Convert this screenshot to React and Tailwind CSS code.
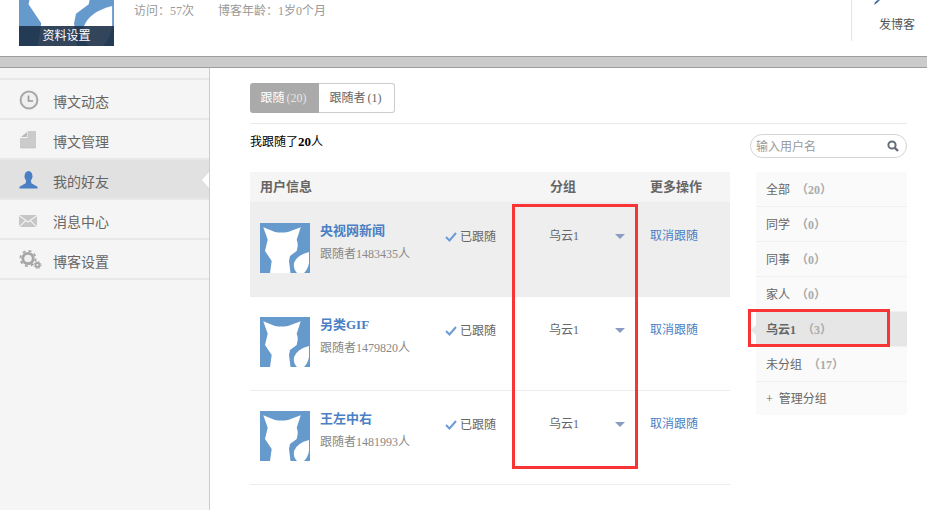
const NAV = [
  { label: "博文动态", icon: "clock" },
  { label: "博文管理", icon: "doc" },
  { label: "我的好友", icon: "user", active: true },
  { label: "消息中心", icon: "mail" },
  { label: "博客设置", icon: "gear" },
];

const FOLLOWS = [
  { name: "央视网新闻", count: "1483435", active: true },
  { name: "另类GIF", count: "1479820" },
  { name: "王左中右", count: "1481993" },
];

const GROUPS = [
  { label: "全部", count: "20" },
  { label: "同学", count: "0" },
  { label: "同事", count: "0" },
  { label: "家人", count: "0" },
  { label: "乌云1", count: "3", active: true },
  { label: "未分组", count: "17" },
];

function Fox({ className }) {
  return (
    <svg viewBox="0 0 50 50" className={className}>
      <rect width="50" height="50" fill="#6699cc" />
      <path
        fill="#fff"
        d="M3.3 4.3 L15 9 Q21 10 28 9 L40.7 4.3 L36.7 16.7 Q38 20 37.7 23 L36.7 28 L30 33 L29 38 L30.5 50 L10 50 L11.7 38 L5 28 L7.7 16.7 Z"
      />
      <path
        fill="#fff"
        d="M49 29 L49 40 Q48 46 44 50 L37 50 Q33 46 34 40 Q37 32 49 29 Z"
      />
    </svg>
  );
}

function NavIcon({ type }) {
  if (type === "clock") {
    return (
      <svg viewBox="0 0 20 20" className="w-[20px] h-[20px]">
        <circle cx="10" cy="10" r="8.4" fill="#f0f0f0" stroke="#a8a8a8" strokeWidth="2" />
        <path d="M9.5 5.5 V11 H14" fill="none" stroke="#999" strokeWidth="1.6" />
      </svg>
    );
  }
  if (type === "doc") {
    return (
      <svg viewBox="0 0 16 18" className="w-[16px] h-[18px] ml-[1px]">
        <path d="M1 6 L7 1 L7 6 Z" fill="#bbb" />
        <path d="M8 0.5 H15.5 V17 H0.5 V7.5 H8 Z" fill="#cbcbcb" stroke="#bdbdbd" strokeWidth="0.6" />
      </svg>
    );
  }
  if (type === "user") {
    return (
      <svg viewBox="0 0 20 20" className="w-[19px] h-[20px]">
        <ellipse cx="10" cy="6" rx="4.2" ry="5.5" fill="#4a7fc4" />
        <path d="M7.5 10.5 H12.5 L13 13.5 L19.5 17 V19 H0.5 V17 L7 13.5 Z" fill="#4a7fc4" />
      </svg>
    );
  }
  if (type === "mail") {
    return (
      <svg viewBox="0 0 18 12" className="w-[18px] h-[12px] mt-[2px]">
        <rect width="18" height="12" fill="#c6c6c6" />
        <path d="M0 0.5 L9 7 L18 0.5 M0 12 L6.8 5.5 M18 12 L11.2 5.5" fill="none" stroke="#f2f2f2" strokeWidth="1.1" />
      </svg>
    );
  }
  return (
    <svg viewBox="0 0 23 20" className="w-[23px] h-[20px]">
      <circle cx="9" cy="8.5" r="5.2" fill="#f0f0f0" stroke="#a6a6a6" strokeWidth="2.8" />
      <circle cx="9" cy="8.5" r="7.6" fill="none" stroke="#a6a6a6" strokeWidth="1.8" strokeDasharray="3 3" />
      <circle cx="18.5" cy="15" r="2" fill="#f0f0f0" stroke="#a6a6a6" strokeWidth="1.8" />
      <circle cx="18.5" cy="15" r="3.5" fill="none" stroke="#a6a6a6" strokeWidth="1" strokeDasharray="1.6 1.2" />
    </svg>
  );
}

function Header() {
  return (
    <header className="h-[56px] bg-white flex overflow-hidden">
      <div className="ml-[19px] w-[95px] h-[46px] overflow-hidden relative flex flex-col justify-end shrink-0">
        <Fox className="w-[95px] h-[95px] shrink-0" />
        <div className="absolute left-0 right-0 bottom-0 h-[20px] bg-[#1d3149]/90 text-white text-xs leading-[20px] text-center">
          资料设置
        </div>
      </div>
      <div className="ml-[20px] pt-[3px] flex gap-6 text-xs leading-[16px] text-[#999] h-fit">
        <span>访问：57次</span>
        <span>博客年龄：1岁0个月</span>
      </div>
      <div className="ml-auto mr-[12px] w-[64px] h-[41px] border-l border-[#e5e5e5] flex flex-col items-end">
        <svg viewBox="0 0 12 6" className="w-[12px] h-[6px] mr-[30px] -mt-[1px]">
          <path d="M1 6 L2 3 L6 0 L8 0 L4 4 Z" fill="#4a6fa5" />
        </svg>
        <span className="mt-[12px] text-xs leading-[16px] text-[#555]">发博客</span>
      </div>
    </header>
  );
}

function Sidebar() {
  return (
    <aside className="w-[210px] shrink-0 bg-[#f5f5f5] border-r border-[#ccc]">
      <div className="h-[12px] border-b-2 border-[#e8e8e8]" />
      {NAV.map((item) => (
        <div
          key={item.label}
          className={`relative h-[40px] pt-[2px] flex items-center border-b-2 border-[#e8e8e8] ${item.active ? "bg-[#e1e1e1]" : ""}`}
        >
          <span className="w-[53px] pl-[19px] flex items-center shrink-0">
            <NavIcon type={item.icon} />
          </span>
          <span className="pt-[6px] text-sm text-[#666]">{item.label}</span>
          {item.active && (
            <span className="absolute right-0 top-[12px] border-y-[8px] border-r-[7px] border-y-transparent border-r-white" />
          )}
        </div>
      ))}
    </aside>
  );
}

function FollowRow({ item }) {
  return (
    <div className={`h-[94px] flex border-b border-[#ececec] pl-[10px] pt-[20px] ${item.active ? "bg-[#eeeeee]" : ""}`}>
      <Fox className="w-[50px] h-[50px] shrink-0" />
      <div className="ml-[10px] w-[125px] shrink-0">
        <div className="text-[13px] font-bold leading-[16px] text-[#4a7fc4]">{item.name}</div>
        <div className="mt-[7px] text-xs leading-[16px] text-[#888]">跟随者{item.count}人</div>
      </div>
      <div className="w-[104px] shrink-0 flex items-center h-[28px]">
        <svg viewBox="0 0 12 10" className="w-[12px] h-[10px] mr-[3px]">
          <path d="M1 5 L4.5 8.5 L11 1" fill="none" stroke="#6b9bd8" strokeWidth="2" />
        </svg>
        <span className="text-xs text-[#666]">已跟随</span>
      </div>
      <div className="w-[101px] shrink-0 h-[26px] flex items-center text-xs text-[#666]">
        <span className="w-[66px]">乌云1</span>
        <span className="border-x-[5px] border-t-[5px] border-x-transparent border-t-[#8a9cc4]" />
      </div>
      <div className="h-[26px] flex items-center text-xs text-[#4a7fc4]">取消跟随</div>
    </div>
  );
}

function GroupList() {
  return (
    <div className="w-[151px] -ml-[1px]">
      {GROUPS.map((g) => (
        <div
          key={g.label}
          className={`relative h-[35px] pt-[2px] flex items-center pl-[10px] border-b border-[#f0f0f0] text-xs ${g.active ? "bg-[#e6e6e6] font-bold" : "bg-[#fafafa]"}`}
        >
          <span className="text-[#666]">{g.label}</span>
          <span className="ml-[6px] text-[#aaa] font-bold">（{g.count}）</span>
          {g.active && (
            <span className="absolute -left-[5px] top-[13px] border-y-[5px] border-r-[5px] border-y-transparent border-r-[#e6e6e6]" />
          )}
        </div>
      ))}
      <div className="h-[33px] flex items-center pl-[10px] bg-[#fafafa] text-xs text-[#666]">
        <span className="mr-[6px]">+</span>管理分组
      </div>
    </div>
  );
}

export default function App() {
  return (
    <div
      className="relative w-[927px] h-[510px] overflow-hidden bg-white"
      style={{ fontFamily: '"Liberation Serif","Noto Sans CJK SC",sans-serif' }}
    >
      <Header />
      <div className="h-[12px] bg-[#cbcbcb] border-y border-[#9e9e9e]" />
      <div className="flex h-[442px]">
        <Sidebar />
        <main className="ml-[40px] w-[657px] pt-[15px]">
          <div className="flex w-fit h-[30px] text-xs">
            <div className="w-[69px] pr-[2px] bg-[#aaaaaa] rounded-l-[3px] text-white flex items-center justify-center">
              跟随<span className="ml-[2px] text-[#e5e5e5]">(20)</span>
            </div>
            <div className="w-[76px] pr-[2px] border border-l-0 border-[#ccc] rounded-r-[3px] text-[#666] flex items-center justify-center">
              跟随者<span className="ml-[2px]">(1)</span>
            </div>
          </div>
          <div className="mt-[10px] border-t border-[#eaeaea] flex">
            <div className="w-[480px] shrink-0">
              <div className="h-[48px] pt-[10px] text-xs leading-[16px] text-black">
                我跟随了<b className="text-[13px]">20</b>人
              </div>
              <div className="h-[31px] bg-[#f5f5f5] border-b border-[#ececec] flex items-center pl-[10px] text-[13px] font-bold text-[#666]">
                <span className="w-[290px]">用户信息</span>
                <span className="w-[100px]">分组</span>
                <span>更多操作</span>
              </div>
              {FOLLOWS.map((f) => (
                <FollowRow key={f.name} item={f} />
              ))}
            </div>
            <div className="ml-[20px] flex-1 pt-[10px]">
              <div className="h-[24px] border border-[#d5d5d5] rounded-full flex items-center pl-[5px] pr-[7px] text-xs text-[#999]">
                <span className="pt-[2px]">输入用户名</span>
                <svg viewBox="0 0 12 12" className="ml-auto w-[12px] h-[12px]">
                  <circle cx="5" cy="5" r="3.6" fill="none" stroke="#666d78" strokeWidth="2" />
                  <path d="M7.6 7.6 L11 11" stroke="#666d78" strokeWidth="2.4" />
                </svg>
              </div>
              <div className="mt-[14px] ml-[7px]">
                <GroupList />
              </div>
            </div>
          </div>
        </main>
      </div>
      {/* red annotations drawn over the page */}
      <div className="absolute left-[512px] top-[204px] w-[126px] h-[265px] border-[3px] border-[#f93434]" />
      <div className="absolute left-[748px] top-[309px] w-[142px] h-[38px] border-[3px] border-[#f93434]" />
    </div>
  );
}
